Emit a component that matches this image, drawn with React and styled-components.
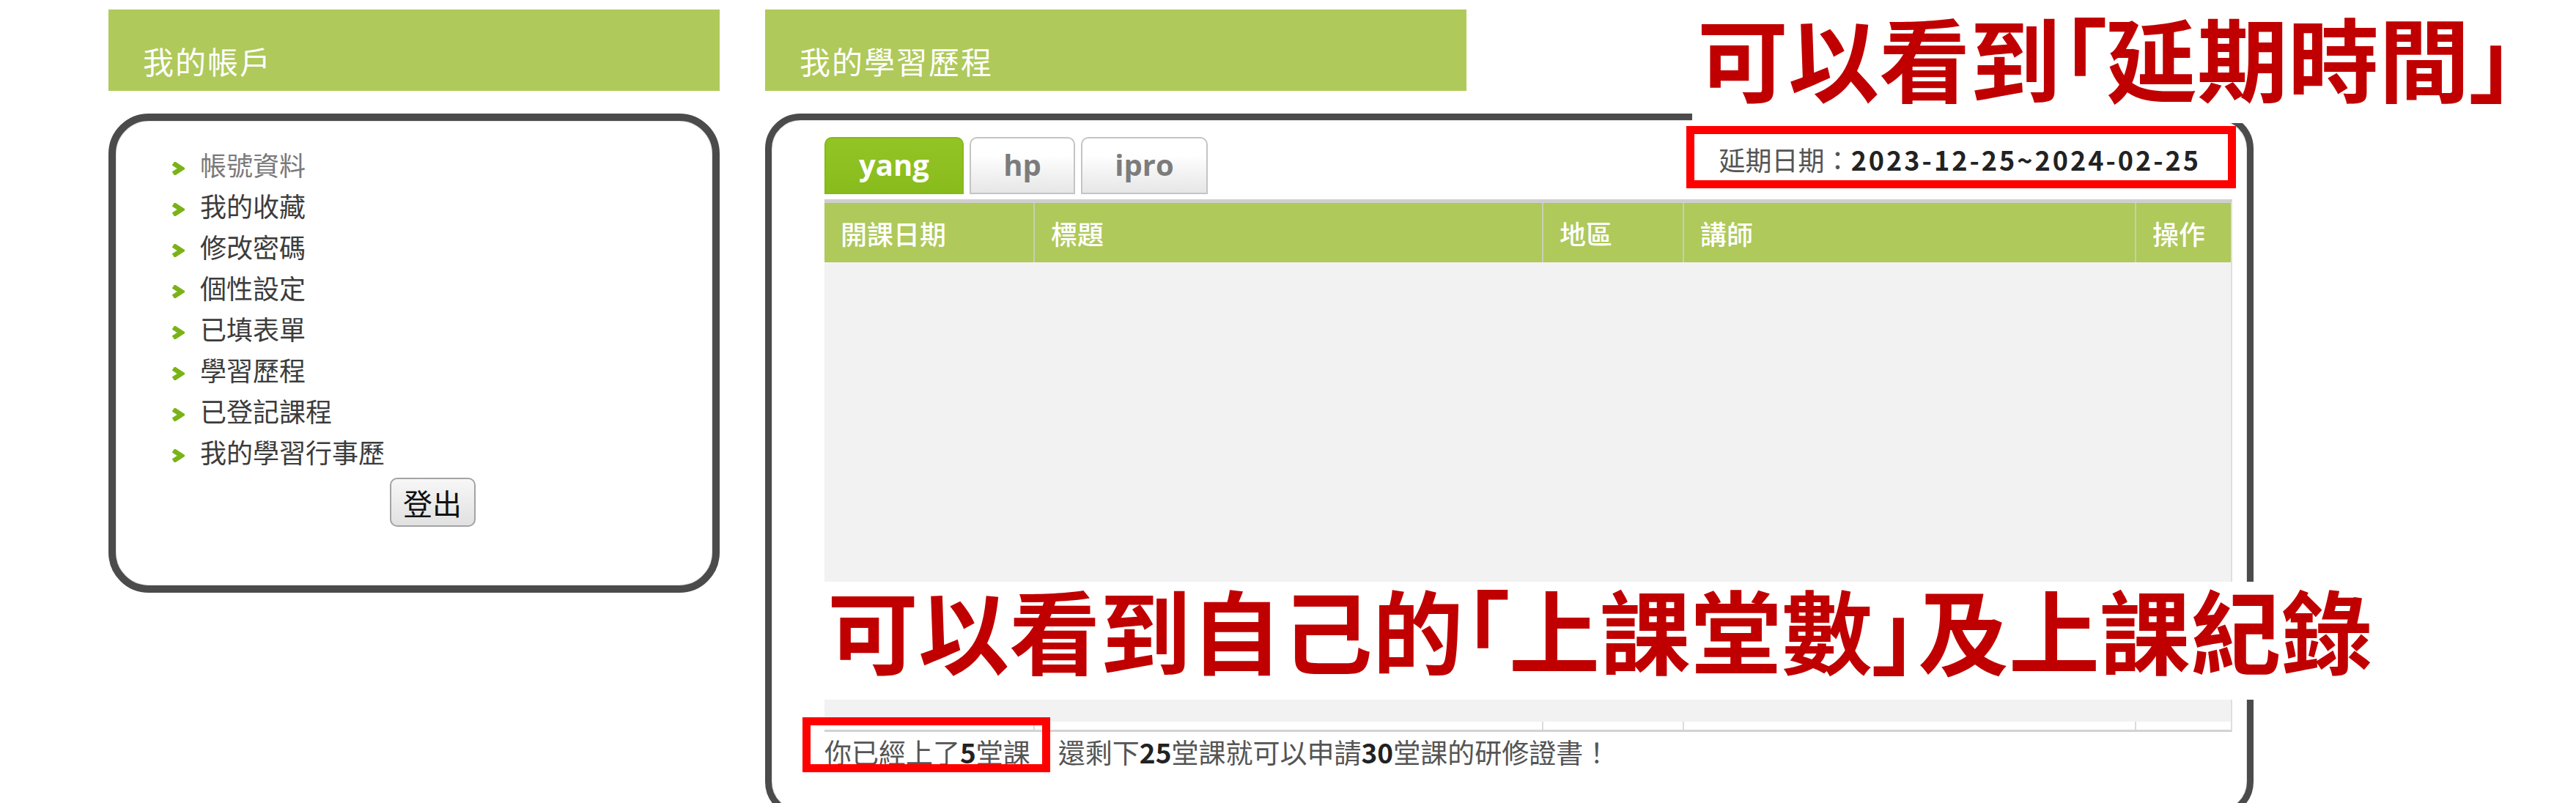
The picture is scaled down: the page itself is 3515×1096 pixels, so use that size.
import React from 'react'
import styled, { createGlobalStyle } from 'styled-components'

const GlobalStyle = createGlobalStyle`
  html, body {
    margin: 0;
    padding: 0;
    background: #fff;
    overflow: hidden;
  }
  body {
    font-family: "Noto Sans CJK TC", "Noto Sans", sans-serif;
  }
`

const cjk = `"Noto Sans CJK TC", "Noto Sans", sans-serif`

const Page = styled.div`
  position: relative;
  width: 3515px;
  height: 1096px;
  display: flex;
  align-items: flex-start;
  gap: 62px;
  padding: 13px 0 0 148px;
  box-sizing: border-box;
`

const Column = styled.div`
  display: flex;
  flex-direction: column;
  gap: 31px;
  width: ${(p) => p.width}px;
`

const SectionTitle = styled.div`
  width: ${(p) => p.width}px;
  height: 111px;
  box-sizing: border-box;
  background: #afc95a;
  color: #fff;
  font-family: ${cjk};
  font-size: 42px;
  font-weight: 400;
  padding: 27px 0 0 47px;
  display: flex;
  align-items: center;
  letter-spacing: 2px;
`

const RoundBox = styled.div`
  box-sizing: border-box;
  border: ${(p) => p.border}px solid #4b4b4b;
  border-radius: ${(p) => p.radius}px;
  box-shadow: inset 0 0 2px rgba(0, 0, 0, 0.35);
  height: ${(p) => p.height}px;
  background: #fff;
`

const Menu = styled.ul`
  list-style: none;
  margin: 0;
  padding: 31px 0 0 75px;
`

const MenuItem = styled.li`
  display: flex;
  align-items: center;
  height: 56px;
  font-family: ${cjk};
  font-size: 36px;
  color: ${(p) => (p.muted ? '#7a7a7a' : '#3c3c3c')};
  svg {
    margin: 12px 21px 0 0;
    flex: none;
  }
`

const LogoutRow = styled.div`
  display: flex;
  justify-content: center;
  padding: 8px 0 0 50px;
`

const LogoutButton = styled.button`
  width: 117px;
  height: 67px;
  border: 2px solid #a3a3a3;
  border-radius: 10px;
  background: linear-gradient(#f7f7f7, #e1e1e1);
  font-family: ${cjk};
  font-size: 40px;
  color: #111;
  padding: 0;
  cursor: pointer;
`

const BoxInner = styled.div`
  padding: 23px 0 0 72px;
`

const TabRow = styled.div`
  width: 1921px;
  height: 78px;
  display: flex;
  align-items: flex-end;
`

const Tabs = styled.div`
  display: flex;
  gap: 8px;
  height: 78px;
`

const Tab = styled.div`
  width: ${(p) => p.width}px;
  box-sizing: border-box;
  display: flex;
  align-items: center;
  justify-content: center;
  border-radius: 10px 10px 0 0;
  font-family: "Open Sans", "Noto Sans", sans-serif;
  font-weight: 700;
  font-size: 40px;
  padding-bottom: 4px;
  ${(p) =>
    p.active
      ? `
    background: linear-gradient(#92c425, #88bc1c);
    color: #fff;
    border: 2px solid #86b81c;
  `
      : `
    background: linear-gradient(#ffffff 30%, #e6e6e6);
    color: #7c7c7c;
    border: 2px solid #c4c4c4;
  `}
`

const Extend = styled.div`
  margin-left: auto;
  margin-right: 43px;
  align-self: flex-start;
  margin-top: 4px;
  font-family: ${cjk};
  font-size: 36px;
  color: #555;
  b {
    color: #222;
    font-weight: 700;
    letter-spacing: 3px;
  }
`

const Table = styled.div`
  width: 1921px;
  margin-top: 7px;
  border-top: 5px solid #cfcfcf;
  border-bottom: 3px solid #d2d2d2;
  border-right: 2px solid #dedede;
  box-sizing: border-box;
`

const Row = styled.div`
  display: grid;
  grid-template-columns: 287px 694px 192px 617px 1fr;
  height: ${(p) => p.height}px;
  background: ${(p) => p.bg};
`

const HeadCell = styled.div`
  display: flex;
  align-items: center;
  padding-left: 22px;
  font-family: ${cjk};
  font-size: 36px;
  font-weight: 500;
  color: #fff;
  border-right: 2px solid #c8cfb4;
  &:last-child {
    border-right: none;
  }
`

const Cell = styled.div`
  border-right: 2px solid #dcdcdc;
  &:last-child {
    border-right: none;
  }
`

const Summary = styled.div`
  margin-top: 4px;
  display: flex;
  gap: 38px;
  height: 46px;
  align-items: center;
  font-family: ${cjk};
  font-size: 37px;
  color: #555;
  b {
    color: #222;
    font-weight: 700;
  }
`

/* annotations drawn over the screenshot */
const Callout = styled.div`
  position: absolute;
  left: ${(p) => p.x}px;
  top: ${(p) => p.y}px;
  width: ${(p) => p.w}px;
  height: ${(p) => p.h}px;
  box-sizing: border-box;
  border: 11px solid #ff0000;
`

const Banner = styled.div`
  position: absolute;
  left: ${(p) => p.x}px;
  top: ${(p) => p.y}px;
  width: ${(p) => p.w}px;
  height: ${(p) => p.h}px;
  box-sizing: border-box;
  background: #fff;
  padding: ${(p) => p.pad};
`

const BannerText = styled.span`
  display: inline-block;
  font-family: "Noto Sans CJK TC", "Noto Sans", sans-serif;
  font-weight: 700;
  font-size: 124px;
  line-height: 1;
  color: #c00000;
  white-space: nowrap;
  font-feature-settings: "palt" 1;
`

const Chevron = () => (
  <svg width="19" height="18" viewBox="0 0 19 18">
    <polyline points="3.5,1.8 14.5,9 3.5,16.2" fill="none" stroke="#7ab317" strokeWidth="6.5" />
  </svg>
)

const menu = ['帳號資料', '我的收藏', '修改密碼', '個性設定', '已填表單', '學習歷程', '已登記課程', '我的學習行事歷']

const tabs = [
  { name: 'yang', width: 190, active: true },
  { name: 'hp', width: 144 },
  { name: 'ipro', width: 173 },
]

const heads = ['開課日期', '標題', '地區', '講師', '操作']

export default function App() {
  return (
    <>
      <GlobalStyle />
      <Page>
        <Column width={834}>
          <SectionTitle width={834}>我的帳戶</SectionTitle>
          <RoundBox border={10} radius={55} height={654}>
            <Menu>
              {menu.map((m, i) => (
                <MenuItem key={m} muted={i === 0}>
                  <Chevron />
                  {m}
                </MenuItem>
              ))}
            </Menu>
            <LogoutRow>
              <LogoutButton>登出</LogoutButton>
            </LogoutRow>
          </RoundBox>
        </Column>

        <Column width={2031}>
          <SectionTitle width={957}>我的學習歷程</SectionTitle>
          <RoundBox border={9} radius={48} height={960}>
            <BoxInner>
              <TabRow>
                <Tabs>
                  {tabs.map((t) => (
                    <Tab key={t.name} width={t.width} active={t.active}>
                      {t.name}
                    </Tab>
                  ))}
                </Tabs>
                <Extend>
                  延期日期：<b>2023-12-25~2024-02-25</b>
                </Extend>
              </TabRow>
              <Table>
                <Row height={81} bg="#afc95a">
                  {heads.map((h) => (
                    <HeadCell key={h}>{h}</HeadCell>
                  ))}
                </Row>
                <Row height={627} bg="#f2f2f2" />
                <Row height={11} bg="#fff">
                  {heads.map((h) => (
                    <Cell key={h} />
                  ))}
                </Row>
              </Table>
              <Summary>
                <span>
                  你已經上了<b>5</b>堂課
                </span>
                <span>
                  還剩下<b>25</b>堂課就可以申請<b>30</b>堂課的研修證書！
                </span>
              </Summary>
            </BoxInner>
          </RoundBox>
        </Column>

        <Banner x={2309} y={0} w={1180} h={168} pad="14px 0 0 7px">
          <BannerText>可以看到「延期時間」</BannerText>
        </Banner>
        <Callout x={2301} y={172} w={750} h={85} />

        <Banner x={1115} y={794} w={2200} h={161} pad="1px 0 0 14px">
          <BannerText>可以看到自己的「上課堂數」及上課紀錄</BannerText>
        </Banner>
        <Callout x={1095} y={979} w={338} h={75} />
      </Page>
    </>
  )
}
